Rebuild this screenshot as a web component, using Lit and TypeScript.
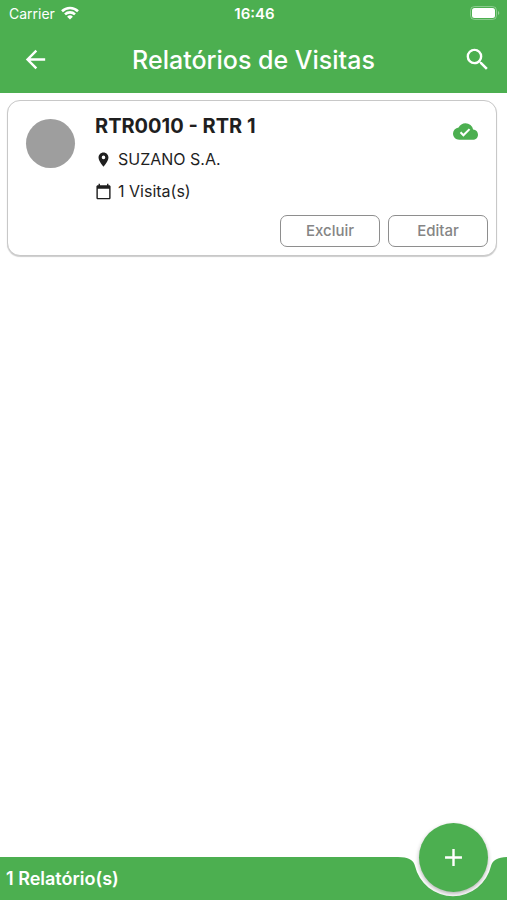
import { LitElement, html, css, svg } from "lit";
import { customElement } from "lit/decorators.js";

const icons = {
  back: svg`<path d="M20 11H7.830l5.590-5.590L12 4l-8 8 8 8 1.410-1.410L7.830 13H20v-2z"/>`,
  search: svg`<path d="M15.500 14h-.79l-.28-.27A6.471 6.471 0 0 0 16 9.500 6.500 6.500 0 1 0 9.500 16c1.610 0 3.090-.59 4.230-1.570l.27.28v.79l5 4.990L20.490 19l-4.990-5zm-6 0C7.010 14 5 11.990 5 9.500S7.010 5 9.500 5 14 7.010 14 9.500 11.990 14 9.500 14z"/>`,
  place: svg`<path d="M12 2C8.130 2 5 5.130 5 9c0 5.250 7 13 7 13s7-7.750 7-13c0-3.870-3.130-7-7-7zm0 9.500a2.500 2.500 0 1 1 0-5 2.500 2.500 0 0 1 0 5z"/>`,
  calendar: svg`<path d="M20 3h-1V1h-2v2H7V1H5v2H4c-1.100 0-2 .9-2 2v16c0 1.100.9 2 2 2h16c1.100 0 2-.9 2-2V5c0-1.100-.9-2-2-2zm0 18H4V8h16v13z"/>`,
  cloudDone: svg`<path d="M19.350 10.040A7.490 7.490 0 0 0 12 4C9.110 4 6.600 5.640 5.350 8.040A5.994 5.994 0 0 0 0 14c0 3.310 2.690 6 6 6h13c2.760 0 5-2.240 5-5 0-2.640-2.050-4.780-4.650-4.960zM10 17l-3.500-3.500 1.410-1.410L10 14.170l5.180-5.170 1.410 1.410L10 17z"/>`,
  add: svg`<path d="M19 13h-6v6h-2v-6H5v-2h6V5h2v6h6v2z"/>`,
};

const icon = (name: keyof typeof icons) =>
  html`<svg class="icon" viewBox="0 0 24 24" aria-hidden="true">${icons[name]}</svg>`;

interface Report {
  title: string;
  client: string;
  visits: number;
}

@customElement("status-bar")
class StatusBar extends LitElement {
  static styles = css`
    :host {
      display: grid;
      grid-template-columns: 1fr auto 1fr;
      align-items: center;
      height: 27px;
      padding: 0 7px 0 9px;
      font-size: 14px;
      line-height: 20px;
    }
    .carrier {
      display: flex;
      align-items: center;
      gap: 6px;
    }
    .time {
      font-size: 15px;
      font-weight: 600;
    }
    .wifi {
      width: 18px;
      height: 14px;
      margin-bottom: 1px;
    }
    .battery {
      justify-self: end;
      width: 30px;
      height: 14px;
      margin-bottom: 1px;
    }
  `;
  render() {
    return html`
      <span class="carrier">
        Carrier
        <svg class="wifi" viewBox="0 0 18 14" aria-hidden="true">
          <g fill="none" stroke="currentColor" stroke-width="2.600">
            <path d="M1 5.200a11.600 11.600 0 0 1 16 0" />
            <path d="M4 8.400a7.300 7.300 0 0 1 10 0" />
          </g>
          <path fill="currentColor" d="M9 13.600 6.100 10.700a4.200 4.200 0 0 1 5.800 0z" />
        </svg>
      </span>
      <span class="time">16:46</span>
      <svg class="battery" viewBox="0 0 30 14" aria-hidden="true">
        <rect x="0.500" y="0.500" width="26" height="13" rx="4" fill="none" stroke="#fff" stroke-opacity=".35" />
        <rect x="2" y="2" width="23" height="10" rx="2.500" fill="#fff" />
        <path d="M28 5a2.200 2.200 0 0 1 0 4z" fill="#fff" fill-opacity=".4" />
      </svg>
    `;
  }
}

@customElement("report-card")
class ReportCard extends LitElement {
  static properties = { report: { attribute: false } };
  declare report: Report;

  static styles = css`
    :host {
      display: block;
      box-sizing: border-box;
      padding: 12px 8px 8px 18px;
      border: 1px solid #c8c8c8;
      border-radius: 13px;
      background: #fff;
      box-shadow: 0 1px 1px rgba(0, 0, 0, 0.2);
      color: #1f1f1f;
    }
    .icon {
      display: block;
      fill: currentColor;
      width: 17px;
      height: 17px;
    }
    .body {
      display: flex;
      gap: 20px;
    }
    .avatar {
      flex: none;
      width: 49px;
      height: 49px;
      margin-top: 6px;
      border-radius: 50%;
      background: #9e9e9e;
    }
    .info {
      flex: 1;
      display: flex;
      flex-direction: column;
      gap: 8px;
    }
    h2 {
      margin: 0;
      font-size: 20px;
      font-weight: 700;
      line-height: 26px;
    }
    p {
      display: flex;
      align-items: center;
      gap: 6px;
      margin: 0;
      font-size: 16px;
      line-height: 24px;
    }
    .synced {
      margin: 6px 10px 0 0;
      color: #4caf50;
    }
    .synced .icon {
      width: 25px;
      height: 25px;
    }
    .actions {
      display: flex;
      justify-content: flex-end;
      gap: 8px;
      margin-top: 12px;
    }
    button {
      width: 100px;
      height: 32px;
      padding: 0;
      border: 1px solid #8e8e8e;
      border-radius: 7px;
      background: #fff;
      color: #858585;
      font: 500 15px/20px Inter, sans-serif;
    }
  `;
  render() {
    const { title, client, visits } = this.report;
    return html`
      <div class="body">
        <span class="avatar"></span>
        <div class="info">
          <h2>${title}</h2>
          <p>${icon("place")}<span>${client}</span></p>
          <p>${icon("calendar")}<span>${visits} Visita(s)</span></p>
        </div>
        <span class="synced" role="img" aria-label="Sincronizado">${icon("cloudDone")}</span>
      </div>
      <div class="actions">
        <button type="button">Excluir</button>
        <button type="button">Editar</button>
      </div>
    `;
  }
}

@customElement("app-root")
class AppRoot extends LitElement {
  static styles = css`
    :host {
      display: flex;
      flex-direction: column;
      min-height: 100vh;
      background: #fff;
      font-family: Inter, sans-serif;
    }
    header {
      background: #4caf50;
      color: #fff;
    }
    .toolbar {
      display: grid;
      grid-template-columns: 48px 1fr 53px;
      align-items: center;
      height: 66px;
      padding: 0 6px 0 11px;
    }
    h1 {
      margin: 0;
      text-align: center;
      font-size: 25px;
      font-weight: 500;
      line-height: 32px;
    }
    button {
      display: grid;
      place-items: center;
      padding: 0;
      border: 0;
      background: none;
      color: #fff;
    }
    .tool {
      justify-self: end;
      width: 48px;
      height: 48px;
      padding-bottom: 2px;
    }
    .icon {
      display: block;
      width: 29px;
      height: 29px;
      fill: currentColor;
    }
    main {
      flex: 1;
      padding: 7px 10px 7px 7px;
    }
    footer {
      position: sticky;
      bottom: 0;
      display: flex;
      height: 43px;
      color: #fff;
    }
    .count {
      flex: 1;
      padding-left: 6px;
      background: #4caf50;
      font-size: 18px;
      font-weight: 600;
      line-height: 43px;
    }
    .notch {
      display: block;
      width: 120px;
      height: 43px;
      fill: #4caf50;
    }
    .fab {
      position: absolute;
      right: 19px;
      top: -34px;
      width: 69px;
      height: 69px;
      border-radius: 50%;
      background: #4caf50;
      box-shadow: 0 2px 4px rgba(0, 0, 0, 0.3);
      clip-path: circle(39px);
    }
  `;

  private reports: Report[] = [{ title: "RTR0010 - RTR 1", client: "SUZANO S.A.", visits: 1 }];

  render() {
    return html`
      <header>
        <status-bar></status-bar>
        <div class="toolbar">
          <button class="tool" type="button" aria-label="Voltar">${icon("back")}</button>
          <h1>Relatórios de Visitas</h1>
          <button class="tool" type="button" aria-label="Buscar">${icon("search")}</button>
        </div>
      </header>
      <main>${this.reports.map((r) => html`<report-card .report=${r}></report-card>`)}</main>
      <footer>
        <span class="count">${this.reports.length} Relatório(s)</span>
        <svg class="notch" viewBox="0 0 120 43" aria-hidden="true">
          <path d="M0 0H11Q26 0 28 9A39 39 0 0 0 104 9Q106 0 121 0V43H0z" />
        </svg>
        <button class="fab" type="button" aria-label="Adicionar">${icon("add")}</button>
      </footer>
    `;
  }
}
